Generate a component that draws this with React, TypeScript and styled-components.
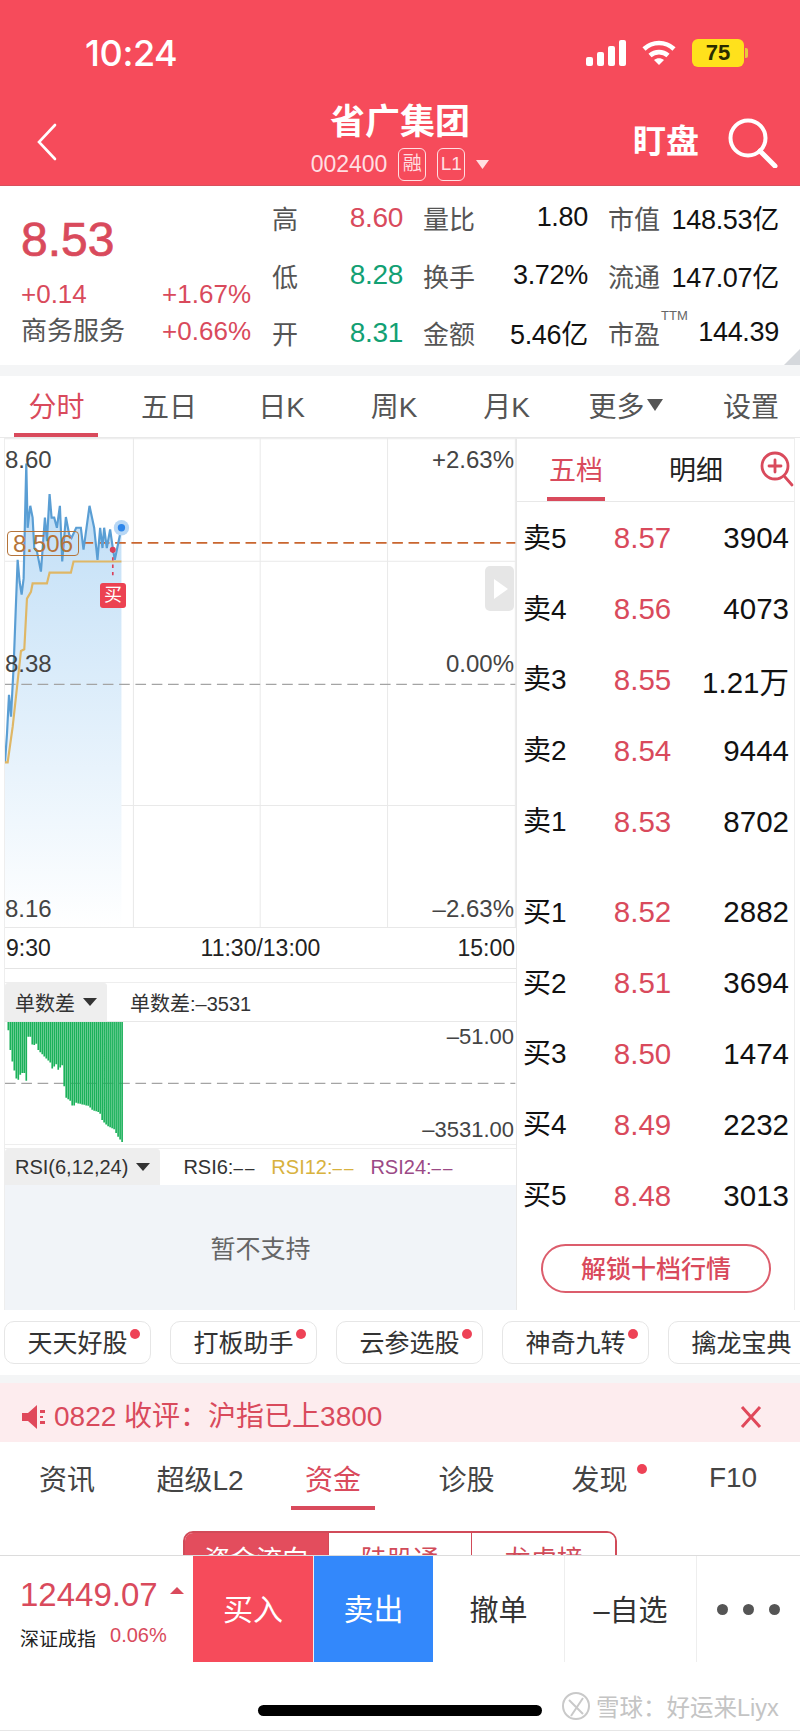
import React, { FC } from "react";
import styled, { createGlobalStyle } from "styled-components";

const RED = "#f64b5b";
const PRICE = "#d94a5c";
const GREEN = "#12a073";
const SANS = `"Liberation Sans", "Noto Sans CJK SC", sans-serif`;

const GlobalStyle = createGlobalStyle`
  html, body { margin: 0; padding: 0; background: #fff; }
  * { box-sizing: border-box; }
`;

const Page = styled.div`
  width: 800px;
  height: 1731px;
  overflow: hidden;
  display: flex;
  flex-direction: column;
  font-family: ${SANS};
  color: #333;
  background: #fff;
`;

/* header */
const Header = styled.header`
  height: 186px;
  flex: none;
  background: ${RED};
  color: #fff;
  border-bottom: 1px solid #d9505c;
`;

const StatusBar = styled.div`
  height: 100px;
  display: flex;
  align-items: flex-start;
  justify-content: space-between;
  padding: 33px 56px 0 85px;
`;

const Clock = styled.div`
  font-family: Inter, sans-serif;
  font-size: 36px;
  line-height: 40px;
  font-weight: 500;
  letter-spacing: -0.4px;
`;

const StatusIcons = styled.div`
  display: flex;
  align-items: center;
  gap: 16px;
  height: 40px;
`;

const Battery = styled.div`
  width: 52px;
  height: 28px;
  border-radius: 6px;
  background: #ffe11c;
  color: #2b2b00;
  font-size: 22px;
  font-weight: 700;
  line-height: 28px;
  text-align: center;
  position: relative;
  &::after {
    content: "";
    position: absolute;
    right: -4px;
    top: 9px;
    width: 3px;
    height: 10px;
    border-radius: 0 2px 2px 0;
    background: #e6c93a;
  }
`;

const NavBar = styled.div`
  height: 85px;
  display: grid;
  grid-template-columns: 1fr auto 1fr;
  padding: 0 22px;
`;

const NavSide = styled.div<{ $end?: boolean }>`
  display: flex;
  align-items: flex-start;
  justify-content: ${(p) => (p.$end ? "flex-end" : "flex-start")};
  gap: 29px;
  padding-top: 18px;
`;

const BackIcon = styled.svg`
  margin: 5px 0 0 14px;
`;

const NavCenter = styled.div`
  display: flex;
  flex-direction: column;
  align-items: center;
`;

const Title = styled.div`
  font-size: 35px;
  line-height: 42px;
  font-weight: 700;
  margin-top: 1px;
`;

const SubTitle = styled.div`
  display: flex;
  align-items: center;
  gap: 11px;
  font-size: 23px;
  color: #ffdfe2;
  height: 36px;
  margin-top: 3px;
`;

const Badge = styled.span`
  width: 28px;
  height: 33px;
  border: 1.5px solid #ffdfe2;
  border-radius: 6px;
  font-size: 19px;
  line-height: 29px;
  text-align: center;
`;

const Watch = styled.div`
  font-size: 33px;
  line-height: 44px;
  font-weight: 700;
  margin-top: 2px;
`;

/* quote summary */
const Quote = styled.section`
  height: 179px;
  flex: none;
  display: flex;
  padding: 3px 21px 0 21px;
  position: relative;
`;

const QuoteLeft = styled.div`
  width: 230px;
  flex: none;
  display: flex;
  flex-direction: column;
`;

const BigPrice = styled.div`
  font-size: 48px;
  line-height: 54px;
  color: ${PRICE};
  -webkit-text-stroke: 0.7px ${PRICE};
  margin-top: 24px;
`;

const QuoteLine = styled.div<{ $top: number }>`
  display: flex;
  justify-content: space-between;
  font-size: 26px;
  line-height: 36px;
  margin-top: ${(p) => p.$top}px;
  color: ${PRICE};
`;

const Muted = styled.span`
  color: #555;
`;

const QuoteGrid = styled.div`
  margin-left: 21px;
  flex: 1;
  display: grid;
  grid-template-columns: 131px 165px 171px;
  column-gap: 20px;
  grid-auto-rows: 57.5px;
`;

const QuoteCell = styled.div`
  display: flex;
  align-items: center;
  justify-content: space-between;
  font-size: 26px;
  color: #111;
  white-space: nowrap;
`;

const QuoteLabel = styled.span`
  color: #555;
  position: relative;
`;

const Ttm = styled.sup`
  position: absolute;
  left: 53px;
  top: -6px;
  font-size: 13px;
  color: #666;
`;

const QuoteValue = styled.span<{ $color?: string }>`
  color: ${(p) => p.$color ?? "#111"};
  font-size: ${(p) => (p.$color ? "28px" : "27px")};
  letter-spacing: -0.3px;
`;

const Corner = styled.div`
  position: absolute;
  right: 0;
  bottom: 0;
  width: 0;
  height: 0;
  border-left: 16px solid transparent;
  border-bottom: 16px solid #d5d8dc;
`;

const SectionGap = styled.div<{ $h: number }>`
  height: ${(p) => p.$h}px;
  flex: none;
  background: #f4f5f6;
`;

/* period tabs */
const PeriodTabs = styled.nav`
  height: 62px;
  flex: none;
  display: grid;
  grid-template-columns: 113px 112px 113px 112px 113px 125px 112px;
  border-bottom: 1px solid #e9e9e9;
`;

const PeriodTab = styled.div<{ $active?: boolean; $end?: boolean }>`
  display: flex;
  align-items: center;
  justify-content: ${(p) => (p.$end ? "flex-end" : "center")};
  padding-right: ${(p) => (p.$end ? "21px" : "0")};
  padding-bottom: 3px;
  font-size: 28px;
  color: ${(p) => (p.$active ? PRICE : "#555")};
  position: relative;
  ${(p) =>
    p.$active &&
    `&::after {
      content: "";
      position: absolute;
      left: 14px;
      width: 84px;
      bottom: 0;
      height: 4px;
      background: ${PRICE};
    }`}
`;

const SmallCaret = styled.span`
  width: 0;
  height: 0;
  border-left: 8px solid transparent;
  border-right: 8px solid transparent;
  border-top: 12px solid #555;
  margin-left: 2px;
`;

/* market area */
const Market = styled.section`
  height: 872px;
  flex: none;
  display: flex;
  padding-left: 4px;
`;

const ChartColumn = styled.div`
  width: 512px;
  flex: none;
  display: flex;
  flex-direction: column;
  border-left: 1px solid #eee;
`;

const PriceChart = styled.div`
  height: 490px;
  flex: none;
  position: relative;
  border-bottom: 1px solid #e8e8e8;
`;

const ChartSvg = styled.svg`
  display: block;
  width: 100%;
  height: 100%;
`;

const AxisLabel = styled.span<{ $top: number; $right?: boolean; $size?: number }>`
  position: absolute;
  top: ${(p) => p.$top}px;
  ${(p) => (p.$right ? "right: 2px;" : "left: 0;")}
  font-size: ${(p) => p.$size ?? 24}px;
  line-height: 26px;
  color: #444;
  white-space: nowrap;
`;

const AvgTag = styled.span`
  position: absolute;
  left: 2px;
  top: 93px;
  width: 72px;
  height: 25px;
  border: 1px solid #b5743a;
  border-radius: 4px;
  font-size: 24px;
  line-height: 24px;
  text-align: center;
  color: #b5743a;
`;

const BuyTag = styled.span`
  position: absolute;
  left: 95px;
  top: 145px;
  width: 26px;
  height: 25px;
  border-radius: 3px;
  background: #ec4252;
  color: #fff;
  font-size: 18px;
  line-height: 25px;
  text-align: center;
`;

const PlayTab = styled.div`
  position: absolute;
  left: 480px;
  top: 128px;
  width: 29px;
  height: 45px;
  border-radius: 5px;
  background: #e6e6e6;
  display: flex;
  align-items: center;
  justify-content: center;
  &::after {
    content: "";
    border-left: 14px solid #fff;
    border-top: 10px solid transparent;
    border-bottom: 10px solid transparent;
    margin-left: 2px;
  }
`;

const TimeRow = styled.div`
  height: 41px;
  flex: none;
  display: grid;
  grid-template-columns: 1fr auto 1fr;
  align-items: center;
  font-size: 23px;
  color: #222;
  padding: 0 1px;
  border-bottom: 1px solid #e4e4e4;
`;

const TimeEnd = styled.span`
  text-align: right;
`;

const IndicatorHead = styled.div<{ $h: number; $mt: number }>`
  height: ${(p) => p.$h}px;
  margin-top: ${(p) => p.$mt}px;
  flex: none;
  display: flex;
  align-items: center;
  font-size: 20px;
  color: #333;
  border-top: 1px solid #eee;
`;

const IndicatorPick = styled.div`
  height: 100%;
  background: #eeeeee;
  border-radius: 3px 3px 0 0;
  display: flex;
  align-items: center;
  gap: 8px;
  padding: 0 10px;
  margin-right: 23px;
`;

const PickCaret = styled.span`
  width: 0;
  height: 0;
  border-left: 7px solid transparent;
  border-right: 7px solid transparent;
  border-top: 8px solid #333;
`;

const IndicatorValue = styled.span<{ $color?: string }>`
  color: ${(p) => p.$color ?? "#333"};
  margin-right: 15px;
  white-space: nowrap;
`;

const Dashes = styled.span`
  font-size: 17px;
  letter-spacing: 2px;
`;

const DiffChart = styled.div`
  height: 124px;
  flex: none;
  position: relative;
  border-top: 1px solid #e8e8e8;
  border-bottom: 1px solid #eee;
`;

const Unsupported = styled.div`
  flex: 1;
  background: #f1f4f8;
  display: flex;
  align-items: center;
  justify-content: center;
  font-size: 25px;
  color: #666;
  padding-bottom: 2px;
`;

/* order book */
const BookColumn = styled.aside`
  width: 279px;
  flex: none;
  display: flex;
  flex-direction: column;
  border-left: 1px solid #e8e8e8;
  border-right: 1px solid #eee;
  border-top: 1px solid #eee;
  padding-bottom: 17px;
`;

const BookTabs = styled.div`
  height: 63px;
  flex: none;
  display: flex;
  align-items: center;
  position: relative;
  border-bottom: 1px solid #e8e8e8;
  font-size: 27px;
  color: #222;
`;

const BookTab = styled.div<{ $active?: boolean; $w: number }>`
  width: ${(p) => p.$w}px;
  height: 100%;
  display: flex;
  align-items: center;
  justify-content: center;
  padding-bottom: 4px;
  color: ${(p) => (p.$active ? PRICE : "#222")};
  position: relative;
  ${(p) =>
    p.$active &&
    `&::after {
      content: "";
      position: absolute;
      left: 30px;
      width: 58px;
      bottom: 0;
      height: 4px;
      background: ${PRICE};
    }`}
`;

const ZoomIcon = styled.svg`
  position: absolute;
  right: 0;
  top: 12px;
`;

const BookGroup = styled.div<{ $mt?: number }>`
  margin-top: ${(p) => p.$mt ?? 0}px;
  flex: none;
`;

const BookRow = styled.div`
  height: 70.8px;
  display: grid;
  grid-template-columns: 81px 77px 1fr;
  align-items: center;
  padding: 0 5px 0 6px;
  font-size: 29.500px;
  color: #111;
`;

const BookName = styled.span`
  font-size: 28px;
  line-height: 32px;
  padding-top: 1px;
  white-space: nowrap;
`;

const BookPrice = styled.span`
  color: ${PRICE};
  text-align: center;
`;

const BookVolume = styled.span`
  text-align: right;
  white-space: nowrap;
`;

const Unlock = styled.div`
  margin: 13px 23px 0 24px;
  height: 49px;
  border: 2px solid #dc5d6c;
  border-radius: 25px;
  display: flex;
  align-items: center;
  justify-content: center;
  font-size: 25px;
  font-weight: 500;
  color: ${PRICE};
  padding-bottom: 2px;
`;

/* shortcuts */
const ChipRow = styled.div`
  height: 65px;
  flex: none;
  display: flex;
  gap: 19px;
  padding: 11px 0 0 4px;
  overflow: hidden;
`;

const Chip = styled.div`
  width: 147px;
  height: 43px;
  flex: none;
  border: 1px solid #e6e6e6;
  border-radius: 10px;
  display: flex;
  align-items: center;
  justify-content: center;
  font-size: 25px;
  color: #333;
  position: relative;
  padding-bottom: 4px;
`;

const Dot = styled.i<{ $x: number; $y: number }>`
  position: absolute;
  left: ${(p) => p.$x}px;
  top: ${(p) => p.$y}px;
  width: 10px;
  height: 10px;
  border-radius: 50%;
  background: #ee4256;
`;

const Notice = styled.div`
  height: 59px;
  flex: none;
  background: #fdecee;
  display: flex;
  align-items: center;
  padding: 8px 38px 0 22px;
  font-size: 28px;
  color: ${PRICE};
`;

const NoticeText = styled.span`
  margin-left: 6px;
  flex: 1;
  line-height: 36px;
`;

/* lower tabs */
const Lower = styled.section`
  height: 113px;
  flex: none;
  overflow: hidden;
`;

const LowerTabs = styled.nav`
  height: 68px;
  display: grid;
  grid-template-columns: 134px 132px 134px 133px 133px 134px;
`;

const LowerTab = styled.div<{ $active?: boolean }>`
  display: flex;
  align-items: center;
  justify-content: center;
  font-size: 28px;
  color: ${(p) => (p.$active ? PRICE : "#444")};
  position: relative;
  padding-top: 4px;
  ${(p) =>
    p.$active &&
    `&::after {
      content: "";
      position: absolute;
      left: 25px;
      width: 84px;
      bottom: 0;
      height: 4px;
      background: ${PRICE};
    }`}
`;

const Segments = styled.div`
  margin: 21px 0 0 183px;
  width: 434px;
  height: 60px;
  display: flex;
  border: 2px solid #d14b59;
  border-radius: 10px 10px 0 0;
  overflow: hidden;
`;

const Segment = styled.div<{ $active?: boolean }>`
  flex: 1;
  text-align: center;
  font-size: 26px;
  line-height: 54px;
  background: ${(p) => (p.$active ? "#e34d5d" : "#fff")};
  color: ${(p) => (p.$active ? "#fff" : "#d14b59")};
  & + & {
    border-left: 1px solid #d14b59;
  }
`;

/* bottom bar */
const BottomBar = styled.footer`
  flex: 1;
  border-top: 1px solid #dcdcdc;
  border-bottom: 1px solid #e6e6e6;
  position: relative;
  background: #fff;
`;

const Actions = styled.div`
  height: 106px;
  display: flex;
`;

const IndexBox = styled.div`
  width: 193px;
  flex: none;
  padding: 20px 0 0 20px;
`;

const IndexValue = styled.div`
  display: flex;
  gap: 12px;
  font-size: 33px;
  line-height: 38px;
  color: ${PRICE};
  white-space: nowrap;
`;

const UpMark = styled.span`
  width: 0;
  height: 0;
  margin-top: 11px;
  border-left: 7px solid transparent;
  border-right: 7px solid transparent;
  border-bottom: 7px solid ${PRICE};
`;

const IndexMeta = styled.div`
  display: flex;
  gap: 14px;
  font-size: 19px;
  margin-top: 10px;
  color: #222;
  white-space: nowrap;
`;

const IndexChange = styled.span`
  color: ${PRICE};
  font-size: 20px;
`;

const TradeButton = styled.div<{ $bg: string }>`
  width: 120px;
  flex: none;
  background: ${(p) => p.$bg};
  color: #fff;
  display: flex;
  align-items: center;
  justify-content: center;
  font-size: 30px;
  padding-bottom: 5px;
  & + & {
    border-left: 1px solid #eee;
  }
`;

const ActionCell = styled.div<{ $w: number; $line?: boolean }>`
  width: ${(p) => p.$w}px;
  flex: none;
  display: flex;
  align-items: center;
  justify-content: center;
  gap: 15px;
  font-size: 29px;
  color: #333;
  padding-bottom: 3px;
  border-right: ${(p) => (p.$line ? "1px solid #eee" : "none")};
`;

const MoreDot = styled.i`
  width: 11px;
  height: 11px;
  border-radius: 50%;
  background: #555;
  margin-top: 3px;
`;

const HomeBar = styled.div`
  width: 284px;
  height: 11px;
  border-radius: 6px;
  background: #000;
  margin: 43px 0 0 258px;
`;

const Watermark = styled.div`
  position: absolute;
  left: 562px;
  top: 130px;
  display: flex;
  align-items: center;
  gap: 6px;
  font-size: 23.5px;
  color: #c4c4c4;
  white-space: nowrap;
`;

const bluePoints =
  "12,985 18,900 24,785 30,850 38,700 44,540 50,385 56,450 62,488 68,440 76,100 80,290 88,225 95,260 100,350 108,360 120,420 132,260 138,330 146,190 152,260 160,260 168,290 177,225 184,390 195,258 205,310 212,320 226,290 240,290 248,355 266,225 280,290 290,385 298,290 305,350 310,290 318,350 328,295 336,350 342,385 362,290";
const avgPoints =
  "12,985 20,985 35,880 45,790 60,655 70,650 78,500 90,480 95,455 138,455 146,423 210,423 218,390 362,390";

const diffProfile: [number, number][] = [
  [22, 330], [30, 410], [38, 440], [44, 475], [52, 480], [60, 460], [70, 460], [78, 490],
  [82, 350], [90, 350], [96, 385], [104, 365], [112, 390], [130, 410], [150, 430], [155, 450],
  [165, 430], [172, 450], [185, 435], [190, 500], [196, 535], [210, 545], [216, 565], [225, 550],
  [265, 560], [275, 572], [297, 580], [305, 605], [320, 620], [340, 630], [350, 650], [368, 675],
];

function diffBars() {
  let d = "";
  for (let x = 22; x < 370; x += 6) {
    const i = diffProfile.findIndex(([px]) => px > x);
    const [x1, y1] = diffProfile[i < 0 ? diffProfile.length - 1 : i];
    const [x0, y0] = diffProfile[i <= 0 ? diffProfile.length - 2 : i - 1];
    const y = y0 + ((y1 - y0) * (x - x0)) / (x1 - x0);
    d += `M${x} 305V${y.toFixed(0)}`;
  }
  return d;
}

const quoteRows = [
  [
    { label: "高", value: "8.60", color: PRICE },
    { label: "量比", value: "1.80" },
    { label: "市值", value: "148.53亿" },
  ],
  [
    { label: "低", value: "8.28", color: GREEN },
    { label: "换手", value: "3.72%" },
    { label: "流通", value: "147.07亿" },
  ],
  [
    { label: "开", value: "8.31", color: GREEN },
    { label: "金额", value: "5.46亿" },
    { label: "市盈", value: "144.39", ttm: true },
  ],
];

const sells = [
  ["卖5", "8.57", "3904"],
  ["卖4", "8.56", "4073"],
  ["卖3", "8.55", "1.21万"],
  ["卖2", "8.54", "9444"],
  ["卖1", "8.53", "8702"],
];
const buys = [
  ["买1", "8.52", "2882"],
  ["买2", "8.51", "3694"],
  ["买3", "8.50", "1474"],
  ["买4", "8.49", "2232"],
  ["买5", "8.48", "3013"],
];

const Book: FC<{ rows: string[][] }> = ({ rows }) => (
  <>
    {rows.map(([name, price, volume]) => (
      <BookRow key={name}>
        <BookName>{name}</BookName>
        <BookPrice>{price}</BookPrice>
        <BookVolume>{volume}</BookVolume>
      </BookRow>
    ))}
  </>
);

export default function App() {
  return (
    <Page>
      <GlobalStyle />
      <Header>
        <StatusBar>
          <Clock>10:24</Clock>
          <StatusIcons>
            <svg width="40" height="28" viewBox="0 0 40 28" fill="#fff">
              <rect x="0" y="18" width="7" height="9" rx="2" />
              <rect x="11" y="13" width="7" height="14" rx="2" />
              <rect x="22" y="7" width="7" height="20" rx="2" />
              <rect x="33" y="1" width="7" height="26" rx="2" />
            </svg>
            <svg width="34" height="28" viewBox="0 0 34 28" fill="none" stroke="#fff" strokeWidth="4.6">
              <path d="M2 10c8.500-8 21.500-8 30 0" />
              <path d="M8 16.500c5-4.500 13-4.500 18 0" />
              <path d="M17 26l-5-5c3-2.500 7-2.500 10 0z" fill="#fff" stroke="none" />
            </svg>
            <Battery>75</Battery>
          </StatusIcons>
        </StatusBar>
        <NavBar>
          <NavSide>
            <BackIcon width="22" height="38" viewBox="0 0 22 38" fill="none" stroke="#fff" strokeWidth="2.6" strokeLinecap="round">
              <path d="M19 2L3 19l16 17" />
            </BackIcon>
          </NavSide>
          <NavCenter>
            <Title>省广集团</Title>
            <SubTitle>
              <span>002400</span>
              <Badge>融</Badge>
              <Badge>L1</Badge>
              <svg width="13" height="9" viewBox="0 0 13 9" fill="#ffdfe2">
                <path d="M0 0h13L6.500 9z" />
              </svg>
            </SubTitle>
          </NavCenter>
          <NavSide $end>
            <Watch>盯盘</Watch>
            <svg width="50" height="50" viewBox="0 0 50 50" fill="none" stroke="#fff" strokeWidth="4" strokeLinecap="round">
              <circle cx="20" cy="20" r="17.500" />
              <path d="M32 33l15 15" strokeWidth="5" />
            </svg>
          </NavSide>
        </NavBar>
      </Header>

      <Quote>
        <QuoteLeft>
          <BigPrice>8.53</BigPrice>
          <QuoteLine $top={9}>
            <span>+0.14</span>
            <span>+1.67%</span>
          </QuoteLine>
          <QuoteLine $top={1}>
            <Muted>商务服务</Muted>
            <span>+0.66%</span>
          </QuoteLine>
        </QuoteLeft>
        <QuoteGrid>
          {quoteRows.flat().map((c) => (
            <QuoteCell key={c.label}>
              <QuoteLabel>
                {c.label}
                {c.ttm && <Ttm>TTM</Ttm>}
              </QuoteLabel>
              <QuoteValue $color={c.color}>{c.value}</QuoteValue>
            </QuoteCell>
          ))}
        </QuoteGrid>
        <Corner />
      </Quote>
      <SectionGap $h={11} />

      <PeriodTabs>
        <PeriodTab $active>分时</PeriodTab>
        <PeriodTab>五日</PeriodTab>
        <PeriodTab>日K</PeriodTab>
        <PeriodTab>周K</PeriodTab>
        <PeriodTab>月K</PeriodTab>
        <PeriodTab>
          更多
          <SmallCaret />
        </PeriodTab>
        <PeriodTab $end>设置</PeriodTab>
      </PeriodTabs>

      <Market>
        <ChartColumn>
          <PriceChart>
            <ChartSvg viewBox="12 24 1536 1449" preserveAspectRatio="none">
              <defs>
                <linearGradient id="area" x1="0" y1="0" x2="0" y2="1">
                  <stop offset="0" stopColor="#bcdcf6" />
                  <stop offset="1" stopColor="#ffffff" />
                </linearGradient>
              </defs>
              <g stroke="#e9e9e9" strokeWidth="3" fill="none">
                <path d="M398 24V1473M779 24V1473M1162 24V1473M1546 24V1473" />
                <path d="M12 389H1546M360 1113H1546M12 26H1546" />
              </g>
              <polygon points={`12,1473 ${bluePoints} 362,1473`} fill="url(#area)" />
              <path d="M12 754H1546" stroke="#a4a4a4" strokeWidth="4" strokeDasharray="32 17" />
              <path d="M245 335H1546" stroke="#c9662f" strokeWidth="5" strokeDasharray="32 17" />
              <polyline points={bluePoints} fill="none" stroke="#5a9ed4" strokeWidth="6.500" />
              <polyline points={avgPoints} fill="none" stroke="#dfb766" strokeWidth="6.500" />
              <path d="M336 355V440" stroke="#d8405a" strokeWidth="5" strokeDasharray="10 12" />
              <circle cx="336" cy="355" r="9" fill="#d8405a" />
              <circle cx="362" cy="290" r="23" fill="#b7d7f5" />
              <circle cx="362" cy="290" r="11" fill="#2e86ea" />
            </ChartSvg>
            <AxisLabel $top={9}>8.60</AxisLabel>
            <AxisLabel $top={213}>8.38</AxisLabel>
            <AxisLabel $top={458}>8.16</AxisLabel>
            <AxisLabel $right $top={9}>+2.63%</AxisLabel>
            <AxisLabel $right $top={213}>0.00%</AxisLabel>
            <AxisLabel $right $top={458}>–2.63%</AxisLabel>
            <AvgTag>8.506</AvgTag>
            <BuyTag>买</BuyTag>
            <PlayTab />
          </PriceChart>
          <TimeRow>
            <span>9:30</span>
            <span>11:30/13:00</span>
            <TimeEnd>15:00</TimeEnd>
          </TimeRow>
          <IndicatorHead $h={39} $mt={13}>
            <IndicatorPick>
              单数差
              <PickCaret />
            </IndicatorPick>
            <IndicatorValue>单数差:–3531</IndicatorValue>
          </IndicatorHead>
          <DiffChart>
            <ChartSvg viewBox="12 305 1536 370" preserveAspectRatio="none">
              <path d="M12 491H1546" stroke="#a4a4a4" strokeWidth="4" strokeDasharray="32 17" />
              <path d={diffBars()} stroke="#1bb15a" strokeWidth="5" fill="none" />
              <path d="M300 301H372" stroke="#1bb15a" strokeWidth="4" />
            </ChartSvg>
            <AxisLabel $right $size={22} $top={2}>–51.00</AxisLabel>
            <AxisLabel $right $size={22} $top={95}>–3531.00</AxisLabel>
          </DiffChart>
          <IndicatorHead $h={37} $mt={3}>
            <IndicatorPick>
              RSI(6,12,24)
              <PickCaret />
            </IndicatorPick>
            <IndicatorValue>RSI6:<Dashes>––</Dashes></IndicatorValue>
            <IndicatorValue $color="#d8b23e">RSI12:<Dashes>––</Dashes></IndicatorValue>
            <IndicatorValue $color="#9b4a86">RSI24:<Dashes>––</Dashes></IndicatorValue>
          </IndicatorHead>
          <Unsupported>暂不支持</Unsupported>
        </ChartColumn>

        <BookColumn>
          <BookTabs>
            <BookTab $active $w={118}>五档</BookTab>
            <BookTab $w={122}>明细</BookTab>
            <ZoomIcon width="34" height="36" viewBox="0 0 34 36" fill="none" stroke="#d94a5c" strokeWidth="2.8" strokeLinecap="round">
              <circle cx="15" cy="15" r="13" />
              <path d="M15 9v12M9 15h12" />
              <path d="M25 26l7 8" />
            </ZoomIcon>
          </BookTabs>
          <BookGroup $mt={1}>
            <Book rows={sells} />
          </BookGroup>
          <BookGroup $mt={20}>
            <Book rows={buys} />
          </BookGroup>
          <Unlock>解锁十档行情</Unlock>
        </BookColumn>
      </Market>

      <ChipRow>
        <Chip>
          天天好股
          <Dot $x={125} $y={7} />
        </Chip>
        <Chip>
          打板助手
          <Dot $x={125} $y={7} />
        </Chip>
        <Chip>
          云参选股
          <Dot $x={125} $y={7} />
        </Chip>
        <Chip>
          神奇九转
          <Dot $x={125} $y={7} />
        </Chip>
        <Chip>擒龙宝典</Chip>
      </ChipRow>
      <SectionGap $h={8} />

      <Notice>
        <svg width="26" height="24" viewBox="0 0 26 24" fill="#e0485a">
          <path d="M0 8h6l9-8v24l-9-8H0z" />
          <path d="M18 5h5v3h-5zM18 16h5v3h-5zM18 11h3v2h-3z" />
        </svg>
        <NoticeText>0822 收评：沪指已上3800</NoticeText>
        <svg width="22" height="22" viewBox="0 0 22 22" fill="none" stroke="#e0485a" strokeWidth="3">
          <path d="M2 1l18 20M20 1L2 21" />
        </svg>
      </Notice>

      <Lower>
        <LowerTabs>
          <LowerTab>资讯</LowerTab>
          <LowerTab>超级L2</LowerTab>
          <LowerTab $active>资金</LowerTab>
          <LowerTab>诊股</LowerTab>
          <LowerTab>
            发现
            <Dot $x={104} $y={22} />
          </LowerTab>
          <LowerTab>F10</LowerTab>
        </LowerTabs>
        <Segments>
          <Segment $active>资金流向</Segment>
          <Segment>陆股通</Segment>
          <Segment>龙虎榜</Segment>
        </Segments>
      </Lower>

      <BottomBar>
        <Actions>
          <IndexBox>
            <IndexValue>
              12449.07
              <UpMark />
            </IndexValue>
            <IndexMeta>
              <span>深证成指</span>
              <IndexChange>0.06%</IndexChange>
            </IndexMeta>
          </IndexBox>
          <TradeButton $bg={RED}>买入</TradeButton>
          <TradeButton $bg="#3388fb">卖出</TradeButton>
          <ActionCell $w={132} $line>撤单</ActionCell>
          <ActionCell $w={132} $line>–自选</ActionCell>
          <ActionCell $w={103}>
            <MoreDot />
            <MoreDot />
            <MoreDot />
          </ActionCell>
        </Actions>
        <HomeBar />
        <Watermark>
          <svg width="28" height="40" viewBox="0 0 28 40" fill="none" stroke="#c9c9c9" strokeWidth="2">
            <circle cx="14" cy="20" r="13" />
            <path d="M7 14l14 14M21 12L9 30" />
          </svg>
          <span>雪球：好运来Liyx</span>
        </Watermark>
      </BottomBar>
    </Page>
  );
}
